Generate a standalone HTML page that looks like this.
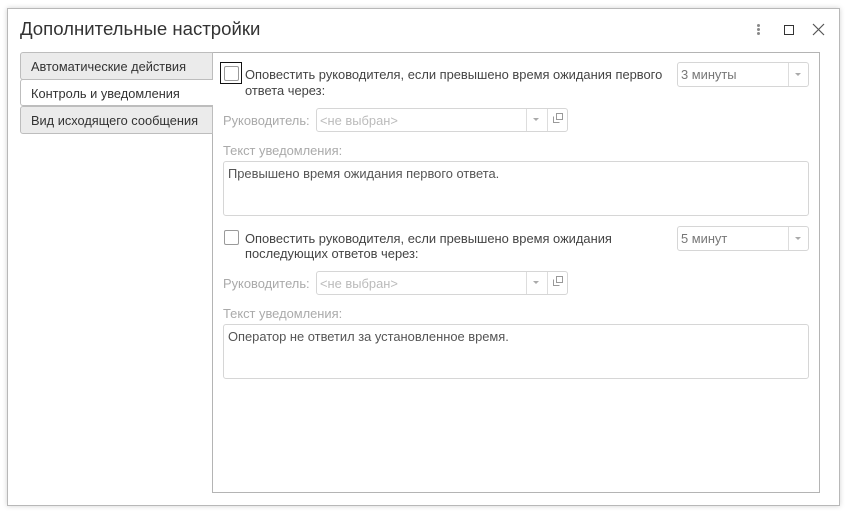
<!DOCTYPE html>
<html><head><meta charset="utf-8">
<style>
*{box-sizing:border-box;margin:0;padding:0}
body{width:847px;height:513px;background:#fff;position:relative;overflow:hidden;font-family:"Liberation Sans",Arial,sans-serif;font-size:12px;color:#444}
.a{position:absolute}
.win{left:7px;top:8px;width:833px;height:498px;border:1px solid #b8b8b8;box-shadow:0 0 5px rgba(0,0,0,.18);background:#fff}
.title{left:20px;top:18px;font-size:18.6px;color:#333;white-space:nowrap}
.tab{left:20px;width:193px;height:28px;border:1px solid #bdbdbd;background:#ebebeb;border-radius:3px 0 0 3px;padding:6px 0 0 10px;color:#333;font-size:12.8px;white-space:nowrap}
.panel{left:212px;top:52px;width:608px;height:441px;border:1px solid #b4b4b4;background:#fff}
.t{white-space:nowrap;font-size:12.9px;color:#444}
.g{color:#aaa}
.fld{border:1px solid #d6d6d6;border-radius:3px;background:#fff}
.cb{width:15px;height:15px;border:1px solid #9a9a9a;border-radius:2px;background:#fff}
.tri{width:0;height:0;border-left:3px solid transparent;border-right:3px solid transparent;border-top:3px solid #aaa}
</style></head><body>
<div class="a win"></div>
<div class="a title">Дополнительные настройки</div>
<div class="a" style="left:757px;top:24px;width:3px;height:3px;background:#888;border-radius:50%"></div>
<div class="a" style="left:757px;top:28px;width:3px;height:3px;background:#888;border-radius:50%"></div>
<div class="a" style="left:757px;top:32px;width:3px;height:3px;background:#888;border-radius:50%"></div>
<div class="a" style="left:784px;top:25px;width:10px;height:10px;border:1.3px solid #333"></div>
<svg class="a" style="left:812px;top:23px" width="13" height="13"><path d="M1 1L12 12M12 1L1 12" stroke="#555" stroke-width="1.2"/></svg>

<div class="a panel"></div>
<div class="a tab" style="top:52px">Автоматические действия</div>
<div class="a tab" style="top:106px">Вид исходящего сообщения</div>
<div class="a tab" style="top:79px;height:27px;background:#fff;border-right:none;width:193px;z-index:2">Контроль и уведомления</div>

<div class="a" style="left:220px;top:62px;width:22px;height:22px;border:1.3px solid #111"></div>
<div class="a cb" style="left:224px;top:66px"></div>
<div class="a t" style="left:245px;top:67px">Оповестить руководителя, если превышено время ожидания первого</div>
<div class="a t" style="left:245px;top:83px">ответа через:</div>
<div class="a fld" style="left:677px;top:62px;width:132px;height:25px"></div>
<div class="a" style="left:788px;top:63px;width:1px;height:23px;background:#ddd"></div>
<div class="a tri" style="left:795px;top:73px"></div>
<div class="a t" style="left:681px;top:67px;color:#777">3 минуты</div>

<div class="a t g" style="left:223px;top:113px">Руководитель:</div>
<div class="a fld" style="left:316px;top:108px;width:252px;height:24px"></div>
<div class="a" style="left:526px;top:109px;width:1px;height:22px;background:#ddd"></div>
<div class="a" style="left:547px;top:109px;width:1px;height:22px;background:#ddd"></div>
<div class="a tri" style="left:533px;top:118px"></div>
<svg class="a" style="left:553px;top:113px" width="11" height="11"><path d="M3.5 0.5H9.5V6.5H3.5Z M0.5 3.5V9.5H6.5" fill="none" stroke="#999" stroke-width="1"/></svg>
<div class="a t" style="left:320px;top:113px;color:#bbb">&lt;не выбран&gt;</div>

<div class="a t g" style="left:223px;top:143px">Текст уведомления:</div>
<div class="a fld" style="left:223px;top:161px;width:586px;height:55px"></div>
<div class="a t" style="left:228px;top:166px;color:#555">Превышено время ожидания первого ответа.</div>

<div class="a cb" style="left:224px;top:230px"></div>
<div class="a t" style="left:245px;top:231px">Оповестить руководителя, если превышено время ожидания</div>
<div class="a t" style="left:245px;top:246px">последующих ответов через:</div>
<div class="a fld" style="left:677px;top:226px;width:132px;height:25px"></div>
<div class="a" style="left:788px;top:227px;width:1px;height:23px;background:#ddd"></div>
<div class="a tri" style="left:795px;top:237px"></div>
<div class="a t" style="left:681px;top:231px;color:#777">5 минут</div>

<div class="a t g" style="left:223px;top:276px">Руководитель:</div>
<div class="a fld" style="left:316px;top:271px;width:252px;height:24px"></div>
<div class="a" style="left:526px;top:272px;width:1px;height:22px;background:#ddd"></div>
<div class="a" style="left:547px;top:272px;width:1px;height:22px;background:#ddd"></div>
<div class="a tri" style="left:533px;top:281px"></div>
<svg class="a" style="left:553px;top:276px" width="11" height="11"><path d="M3.5 0.5H9.5V6.5H3.5Z M0.5 3.5V9.5H6.5" fill="none" stroke="#999" stroke-width="1"/></svg>
<div class="a t" style="left:320px;top:276px;color:#bbb">&lt;не выбран&gt;</div>

<div class="a t g" style="left:223px;top:306px">Текст уведомления:</div>
<div class="a fld" style="left:223px;top:324px;width:586px;height:55px"></div>
<div class="a t" style="left:228px;top:329px;color:#555">Оператор не ответил за установленное время.</div>
</body></html>
